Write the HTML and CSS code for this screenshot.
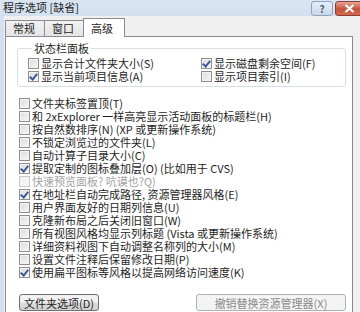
FILE: index.html
```html
<!DOCTYPE html>
<html lang="zh-CN">
<head>
    <meta charset="UTF-8">
    <title>程序选项 [缺省]</title>
    <link rel="stylesheet" href="styles.css">
</head>
<body>

<div class="titlebar">
    <span class="title">程序选项 [缺省]</span>
    <div class="caption-btns">
        <span class="cap-btn help">?</span>
        <span class="cap-btn close">
            <svg width="11" height="9" viewBox="0 0 11 9"><path d="M1.5 1 L9.5 8 M9.5 1 L1.5 8" stroke="#fff" stroke-width="2.2"/></svg>
        </span>
    </div>
</div>

<div class="client">
    <div class="tabs">
        <div class="tab">常规</div>
        <div class="tab">窗口</div>
        <div class="tab active">高级</div>
    </div>

    <div class="panel">
        <fieldset class="group">
            <legend>状态栏面板</legend>
            <div class="group-grid">
                <label class="check"><span class="box"></span>显示合计文件夹大小(S)</label>
                <label class="check"><span class="box checked"></span>显示磁盘剩余空间(F)</label>
                <label class="check"><span class="box checked"></span>显示当前项目信息(A)</label>
                <label class="check"><span class="box"></span>显示项目索引(I)</label>
            </div>
        </fieldset>

        <div class="options">
            <label class="check"><span class="box"></span>文件夹标签置顶(T)</label>
            <label class="check"><span class="box"></span>和 2xExplorer 一样高亮显示活动面板的标题栏(H)</label>
            <label class="check"><span class="box"></span>按自然数排序(N) (XP 或更新操作系统)</label>
            <label class="check"><span class="box"></span>不锁定浏览过的文件夹(L)</label>
            <label class="check"><span class="box"></span>自动计算子目录大小(C)</label>
            <label class="check"><span class="box checked"></span>提取定制的图标叠加层(O) (比如用于 CVS)</label>
            <label class="check disabled"><span class="box"></span>快速预览面板? 吭谟也?Q)</label>
            <label class="check"><span class="box checked"></span>在地址栏自动完成路径, 资源管理器风格(E)</label>
            <label class="check"><span class="box"></span>用户界面友好的日期列信息(U)</label>
            <label class="check"><span class="box"></span>克隆新布局之后关闭旧窗口(W)</label>
            <label class="check"><span class="box"></span>所有视图风格均显示列标题 (Vista 或更新操作系统)</label>
            <label class="check"><span class="box"></span>详细资料视图下自动调整名称列的大小(M)</label>
            <label class="check"><span class="box"></span>设置文件注释后保留修改日期(P)</label>
            <label class="check"><span class="box checked"></span>使用扁平图标等风格以提高网络访问速度(K)</label>
        </div>

        <div class="buttons">
            <button class="btn">文件夹选项(D)</button>
            <button class="btn" disabled>撤销替换资源管理器(X)</button>
        </div>
    </div>
</div>

</body>
</html>
```

FILE: styles.css
```css
html, body {
    height: 312px;
    overflow: hidden;
}
body {
    margin: 0;
    background-color: #f0f0f0;
    font-family: "Noto Sans CJK SC", sans-serif;
    font-size: 11px;
    line-height: 13px;
    color: #1e1e1e;
}
.titlebar {
    height: 16px;
    background: linear-gradient(#dae5f2, #d3e0ef);
    display: flex;
    justify-content: space-between;
    align-items: flex-start;
}
.title {
    padding-left: 3px;
    line-height: 15px;
}
.caption-btns {
    display: flex;
    gap: 2px;
    padding-top: 1px;
    margin-right: -3px;
}
.cap-btn {
    height: 13px;
    border-radius: 3px;
    display: flex;
    align-items: center;
    justify-content: center;
}
.help {
    width: 20px;
    border: 1px solid #8da3c0;
    background: linear-gradient(#e6eef8, #c9d8ea);
    color: #52627a;
    font-weight: bold;
    font-size: 10px;
    line-height: 13px;
}
.close {
    width: 26px;
    border: 1px solid #8d3f33;
    background: linear-gradient(#e8a493, #c4523c 55%, #d26b52);
}
.client {
    border-left: 4px solid #d3e0ef;
    padding: 4px 7px 0 1px;
}
.tabs {
    display: flex;
    height: 16px;
    align-items: flex-end;
}
.tab {
    height: 15px;
    line-height: 15px;
    padding: 0 7px;
    border: 1px solid #898c95;
    border-bottom: none;
    background: linear-gradient(#f2f2f2, #e4e4e4);
    margin-right: -1px;
    width: 24px;
}
.tab.active {
    height: 18px;
    line-height: 18px;
    background: #fff;
    margin-bottom: -1px;
    width: 26px;
    position: relative;
    z-index: 1;
}
.panel {
    background: #fff;
    border: 1px solid #898c95;
    height: 300px;
    padding: 5px 6px 0 13px;
}
.group {
    margin: 0 0 0 -2px;
    padding: 2px 0 3px 10px;
    border: 1px solid #d5dfe5;
    border-radius: 3px;
}
.group legend {
    padding: 0 2px;
    margin-left: 4px;
    line-height: 13px;
}
.group-grid {
    display: grid;
    grid-template-columns: 173px 1fr;
}
.check {
    display: flex;
    align-items: center;
    height: 13px;
    line-height: 13px;
    white-space: nowrap;
}
.box {
    width: 9px;
    height: 9px;
    border: 1px solid #8f8f8f;
    background: linear-gradient(135deg, #dcdcdc, #f6f6f6);
    box-shadow: inset 0 0 0 1px #f4f4f4;
    margin-right: 2px;
    flex: none;
    display: flex;
    align-items: center;
    justify-content: center;
}
.box.checked::after {
    content: "";
    width: 3px;
    height: 6px;
    border-right: 2px solid #3d5b9a;
    border-bottom: 2px solid #3d5b9a;
    transform: translate(0, -1px) rotate(40deg);
}
.check.disabled {
    color: #a3a3a3;
}
.check.disabled .box {
    border-color: #c9c9c9;
    background: #f4f4f4;
}
.options {
    margin-top: 10px;
}
.buttons {
    display: flex;
    justify-content: space-between;
    margin-top: 15px;
}
.btn {
    font-family: inherit;
    font-size: 11px;
    height: 17px;
    padding: 0;
    border: 1px solid #707070;
    border-radius: 3px;
    background: linear-gradient(#f2f2f2 45%, #dcdcdc 55%, #cfcfcf);
    color: #1e1e1e;
    width: 80px;
    line-height: 14px;
}
.btn:disabled {
    width: 150px;
    border-color: #adb2b5;
    background: #f4f4f4;
    color: #8a8a8a;
}
```
